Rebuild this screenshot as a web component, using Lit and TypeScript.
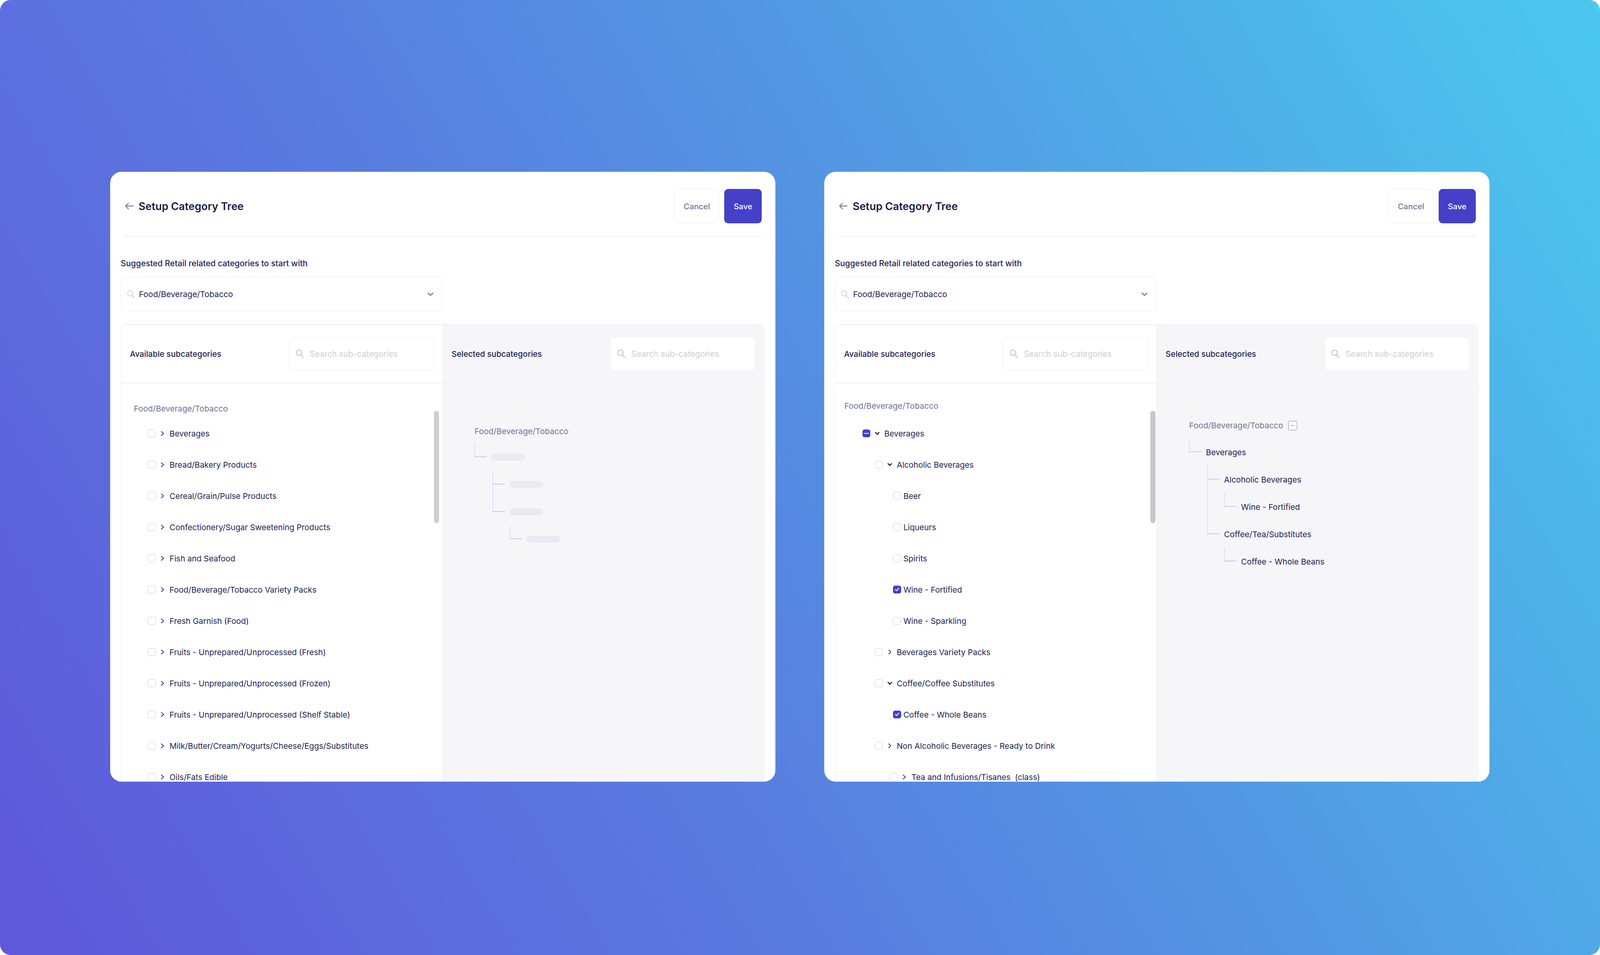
import { LitElement, html, css, svg, nothing, unsafeCSS } from "lit";
import { customElement, property } from "lit/decorators.js";

/* All horizontal measures and type sizes are in reference pixels, scaled by the real viewport width. */
const u = (n: number) => unsafeCSS(`calc(${n} * var(--u))`);
const us = (n: number) => `calc(${n} * var(--u))`;

type Check = "none" | "checked" | "mixed";
type Toggle = "none" | "right" | "down";
interface Row { label: string; indent: number; check?: Check; toggle?: Toggle; }
interface Node { label?: string; depth: number; rise: number; bar?: boolean; }

const INDENT = { l0a: 94, l0b: 96, l1: 140, leaf: 204, l2: 192 };

const ROWS_A: Row[] = [
  "Beverages",
  "Bread/Bakery Products",
  "Cereal/Grain/Pulse Products",
  "Confectionery/Sugar Sweetening Products",
  "Fish and Seafood",
  "Food/Beverage/Tobacco Variety Packs",
  "Fresh Garnish (Food)",
  "Fruits - Unprepared/Unprocessed (Fresh)",
  "Fruits - Unprepared/Unprocessed (Frozen)",
  "Fruits - Unprepared/Unprocessed (Shelf Stable)",
  "Milk/Butter/Cream/Yogurts/Cheese/Eggs/Substitutes",
  "Oils/Fats Edible",
].map((label) => ({ label, indent: INDENT.l0a, toggle: "right" as Toggle }));

const ROWS_B: Row[] = [
  { label: "Beverages", indent: INDENT.l0b, check: "mixed", toggle: "down" },
  { label: "Alcoholic Beverages", indent: INDENT.l1, toggle: "down" },
  { label: "Beer", indent: INDENT.leaf },
  { label: "Liqueurs", indent: INDENT.leaf },
  { label: "Spirits", indent: INDENT.leaf },
  { label: "Wine - Fortified", indent: INDENT.leaf, check: "checked" },
  { label: "Wine - Sparkling", indent: INDENT.leaf },
  { label: "Beverages Variety Packs", indent: INDENT.l1, toggle: "right" },
  { label: "Coffee/Coffee Substitutes", indent: INDENT.l1, toggle: "down" },
  { label: "Coffee - Whole Beans", indent: INDENT.leaf, check: "checked" },
  { label: "Non Alcoholic Beverages - Ready to Drink", indent: INDENT.l1, toggle: "right" },
  { label: "Tea and Infusions/Tisanes  (class)", indent: INDENT.l2, toggle: "right" },
];

const NODES_A: Node[] = [
  { depth: 0, rise: 34, bar: true },
  { depth: 1, rise: 34, bar: true },
  { depth: 1, rise: 70, bar: true },
  { depth: 2, rise: 34, bar: true },
];

const NODES_B: Node[] = [
  { label: "Beverages", depth: 0, rise: 34 },
  { label: "Alcoholic Beverages", depth: 1, rise: 34 },
  { label: "Wine - Fortified", depth: 2, rise: 34 },
  { label: "Coffee/Tea/Substitutes", depth: 1, rise: 174 },
  { label: "Coffee - Whole Beans", depth: 2, rise: 34 },
];

const searchIcon = (heavy: boolean) => html`<svg class="search-ico" viewBox="0 0 28 30" fill="none">
  <circle cx="11.5" cy="11.5" r="9.5" stroke="currentColor" stroke-width="${heavy ? 3.6 : 2.2}"></circle>
  <path d="M18.5 19 L26 28" stroke="currentColor" stroke-width="${heavy ? 4 : 2.6}" stroke-linecap="round"></path>
</svg>`;

const chevRight = svg`<path d="M1.5 1.5 L9.5 8.5 L1.5 15.5" fill="none" stroke="#25245a" stroke-width="2.6" stroke-linecap="round" stroke-linejoin="round"></path>`;
const chevDown = svg`<path d="M2 2 L8 9 L14 2" fill="none" stroke="#0c0c14" stroke-width="3.4" stroke-linecap="round" stroke-linejoin="round"></path>`;

@customElement("setup-card")
class SetupCard extends LitElement {
  @property({ attribute: false }) rows: Row[] = [];
  @property({ attribute: false }) nodes: Node[] = [];
  @property({ type: Boolean }) filled = false;

  static styles = css`
    :host {
      display: block;
      flex: none;
      width: ${u(2347)};
      height: 1562px;
      background: #fff;
      border-radius: ${u(40)};
      overflow: hidden;
      font-family: Inter, "Liberation Sans", sans-serif;
      color: #211f50;
      font-size: ${u(28.3)};
    }
    .body {
      padding: 0 ${u(39)} 0 ${u(37)};
    }
    .head {
      display: flex;
      align-items: center;
      height: 164px;
      margin: 0 ${u(9)} 0 ${u(14)};
      border-bottom: 2px solid #efeff5;
    }
    .head-inner {
      display: flex;
      align-items: center;
      width: 100%;
      padding-top: 12px;
    }
    .back {
      width: ${u(30)};
      height: ${u(24)};
      flex: none;
      margin: 0 ${u(18)} 0 ${u(1)};
    }
    h1 {
      margin: 0;
      font-size: ${u(37.2)};
      font-weight: 600;
      color: #1a1945;
      flex: 1;
    }
    .btn {
      height: 88px;
      box-sizing: border-box;
      border-radius: ${u(14)};
      display: flex;
      align-items: center;
      justify-content: center;
      font-size: ${u(28)};
      font-weight: 500;
    }
    .cancel {
      width: ${u(160)};
      border: ${u(2)} solid #eeeef5;
      color: #6d7596;
      margin-right: ${u(17)};
      background: #fff;
    }
    .save {
      width: ${u(132)};
      background: #4440c8;
      color: #fff;
    }
    .label {
      font-size: ${u(28.8)};
      font-weight: 500;
      line-height: 40px;
      margin-top: 49px;
      color: #211f50;
    }
    .select {
      margin-top: 14px;
      width: ${u(1136)};
      height: 89px;
      box-sizing: border-box;
      border: ${u(2)} solid #eeeef5;
      border-radius: ${u(12)};
      display: flex;
      align-items: center;
      padding: 0 ${u(31)} 0 ${u(21)};
      font-size: ${u(28.5)};
    }
    .select .search-ico {
      margin-right: ${u(14)};
    }
    .select span {
      flex: 1;
    }
    .caret {
      width: ${u(22)};
      height: ${u(13)};
    }
    .search-ico {
      width: ${u(28)};
      height: ${u(30)};
      flex: none;
      color: #cbcbcf;
    }
    .panel {
      margin-top: 32px;
      display: grid;
      grid-template-columns: ${u(1134)} 1fr;
      border: ${u(2)} solid #efeff9;
      border-top-width: 2px;
      border-bottom: none;
      border-radius: ${u(18)} ${u(18)} 0 0;
      height: 1300px;
      box-sizing: border-box;
    }
    .col-a {
      display: flex;
      flex-direction: column;
      position: relative;
      border-right: ${u(2)} solid #efeff9;
      box-sizing: border-box;
      overflow: hidden;
      border-top-left-radius: ${u(16)};
    }
    .col-b {
      display: flex;
      flex-direction: column;
      background: #f6f6f9;
      border-top-right-radius: ${u(16)};
    }
    .col-head {
      height: 150px;
      flex: none;
      box-sizing: border-box;
      border-bottom: 2px solid #efeff9;
      display: flex;
      align-items: center;
      justify-content: space-between;
      font-weight: 500;
      font-size: ${u(28.3)};
    }
    .col-a .col-head {
      padding-left: ${u(31)};
      padding-right: ${u(29)};
    }
    .col-b .col-head {
      padding-left: ${u(32)};
      padding-right: ${u(30)};
    }
    .input {
      width: ${u(512)};
      height: 87px;
      box-sizing: border-box;
      border: ${u(2)} solid #eeeef5;
      border-radius: ${u(12)};
      background: #fff;
      display: flex;
      align-items: center;
      padding-left: ${u(23)};
      gap: ${u(22)};
      font-size: ${u(28.7)};
      font-weight: 400;
      color: #cdcdd1;
    }
    .root {
      height: 40px;
      line-height: 40px;
      color: #6d7596;
      font-size: ${u(28.5)};
    }
    .col-a .root {
      margin: 45px 0 3px ${u(45)};
    }
    :host([filled]) .col-a .root {
      margin: 38px 0 10px ${u(32)};
    }
    .row {
      height: 80px;
      display: flex;
      align-items: center;
      white-space: pre;
      font-size: ${u(28.2)};
      color: #211f50;
    }
    .cb {
      width: ${u(28)};
      height: ${u(28)};
      box-sizing: border-box;
      border: ${u(2)} solid #cdcdcf;
      border-radius: ${u(7)};
      flex: none;
      display: flex;
      align-items: center;
      justify-content: center;
    }
    .cb.checked, .cb.mixed {
      background: #4440c8;
      border-color: #4440c8;
    }
    .cb svg {
      width: ${u(18)};
      height: ${u(16)};
    }
    .cb.mixed i {
      display: block;
      width: ${u(20)};
      height: ${u(4)};
      border-radius: ${u(2)};
      background: #fff;
    }
    .tg {
      width: ${u(49)};
      flex: none;
      display: flex;
      justify-content: center;
    }
    .tg svg {
      display: block;
    }
    .tg.right svg {
      width: ${u(11)};
      height: ${u(17)};
      margin-left: ${u(-1)};
    }
    .tg.down svg {
      width: ${u(16)};
      height: ${u(11)};
    }
    .gap {
      width: ${u(8.5)};
      flex: none;
    }
    .scroll {
      position: absolute;
      top: 220px;
      width: ${u(18)};
      height: 288px;
      border-radius: ${u(9)};
      background: #cfcfd1;
      right: ${u(10)};
    }
    :host([filled]) .scroll {
      right: ${u(2)};
      background: #c6c7c9;
    }
    .tree {
      padding-top: 103px;
    }
    :host([filled]) .tree {
      padding-top: 88px;
    }
    .t-root {
      height: 40px;
      line-height: 40px;
      color: #6d7596;
      font-size: ${u(28.5)};
      display: flex;
      align-items: center;
      gap: ${u(18)};
      margin-left: ${u(113)};
    }
    :host([filled]) .t-root {
      margin-left: ${u(115)};
    }
    .t-menu {
      width: ${u(32)};
      height: ${u(32)};
      box-sizing: border-box;
      border: ${u(2)} solid #747c9b;
      border-radius: ${u(5)};
      background: #fff;
      display: flex;
      align-items: center;
      justify-content: center;
      gap: ${u(1.5)};
    }
    .t-menu i {
      width: ${u(3.4)};
      height: ${u(3.4)};
      border-radius: 50%;
      background: #6d7596;
    }
    .t-row {
      height: 70px;
      position: relative;
      display: flex;
      align-items: center;
      color: #211f50;
      font-size: ${u(28.3)};
      white-space: nowrap;
    }
    .first {
      margin-top: 11px;
    }
    :host([filled]) .first {
      margin-top: 13px;
    }
    .elbow {
      position: absolute;
      bottom: 35px;
      border-left: ${u(2)} solid #c9c6ef;
      border-bottom: 2px solid #c9c6ef;
      width: ${u(42)};
    }
    .bar {
      width: ${u(120)};
      height: 18px;
      border-radius: 9px;
      background: #e9ebf2;
    }
  `;

  renderRow(r: Row) {
    const c = r.check ?? "none";
    return html`<div class="row" style="padding-left:${us(r.indent)}">
      <span class="cb ${c}">
        ${c === "checked"
          ? html`<svg viewBox="0 0 18 16"><path d="M3 8.5 L7.2 12.5 L15 3.5" fill="none" stroke="#fff" stroke-width="3" stroke-linecap="round" stroke-linejoin="round"></path></svg>`
          : c === "mixed" ? html`<i></i>` : nothing}
      </span>
      ${r.toggle === "right"
        ? html`<span class="tg right"><svg viewBox="0 0 11 17">${chevRight}</svg></span>`
        : r.toggle === "down"
        ? html`<span class="tg down"><svg viewBox="0 0 16 11">${chevDown}</svg></span>`
        : html`<span class="gap"></span>`}
      <span>${r.label}</span>
    </div>`;
  }

  renderNode(n: Node, i: number) {
    const base = this.filled ? 115 : 113;
    const x = base + [0, 64, 124][n.depth];
    return html`<div class="t-row ${i === 0 ? "first" : ""}" style="padding-left:${us(x + 59)}">
      <span class="elbow" style="left:${us(x)};height:${n.rise}px"></span>
      ${n.bar ? html`<span class="bar"></span>` : html`<span>${n.label}</span>`}
    </div>`;
  }

  render() {
    return html`<div class="body">
      <div class="head">
        <div class="head-inner">
          <svg class="back" viewBox="0 0 30 24" fill="none">
            <path d="M28.5 12 H2.5 M12 2 L2 12 L12 22" stroke="#6b7394" stroke-width="3" stroke-linecap="round" stroke-linejoin="round"></path>
          </svg>
          <h1>Setup Category Tree</h1>
          <div class="btn cancel">Cancel</div>
          <div class="btn save">Save</div>
        </div>
      </div>
      <div class="label">Suggested Retail related categories to start with</div>
      <div class="select">
        ${searchIcon(false)}
        <span>Food/Beverage/Tobacco</span>
        <svg class="caret" viewBox="0 0 22 13" fill="none"><path d="M2.5 2.5 L11 10.5 L19.5 2.5" stroke="#6b7394" stroke-width="3.6" stroke-linecap="round" stroke-linejoin="round"></path></svg>
      </div>
      <div class="panel">
        <div class="col-a">
          <div class="col-head">
            <span>Available subcategories</span>
            <div class="input">${searchIcon(true)}<span>Search sub-categories</span></div>
          </div>
          <div class="root">Food/Beverage/Tobacco</div>
          ${this.rows.map((r) => this.renderRow(r))}
          <div class="scroll"></div>
        </div>
        <div class="col-b">
          <div class="col-head">
            <span>Selected subcategories</span>
            <div class="input">${searchIcon(true)}<span>Search sub-categories</span></div>
          </div>
          <div class="tree">
            <div class="t-root">
              <span>Food/Beverage/Tobacco</span>
              ${this.filled ? html`<span class="t-menu"><i></i><i></i><i></i></span>` : nothing}
            </div>
            ${this.nodes.map((n, i) => this.renderNode(n, i))}
          </div>
        </div>
      </div>
    </div>`;
  }
}

@customElement("app-root")
class AppRoot extends LitElement {
  static styles = css`
    :host {
      --u: calc(100vw / 5646);
      display: block;
      width: 100%;
      height: 2446px;
      background: #fff;
    }
    .stage {
      height: 2446px;
      box-sizing: border-box;
      border-radius: ${u(38)};
      display: flex;
      gap: ${u(173)};
      padding: 440px 0 0 ${u(389)};
      overflow: hidden;
    }
  `;
  render() {
    /* The colour bands run along a fixed reference direction; keep it when the width changes. */
    const k = window.innerWidth / 5646;
    const angle = (Math.atan2(2340, 1908 * k) * 180) / Math.PI;
    const bg = `background:linear-gradient(${angle.toFixed(1)}deg,#5f57da 0%,#5a79df 35%,#5396e2 60%,#4fb0e8 80%,#4bc8ef 100%)`;
    return html`<div class="stage" style=${bg}>
      <setup-card .rows=${ROWS_A} .nodes=${NODES_A}></setup-card>
      <setup-card filled .rows=${ROWS_B} .nodes=${NODES_B}></setup-card>
    </div>`;
  }
}
